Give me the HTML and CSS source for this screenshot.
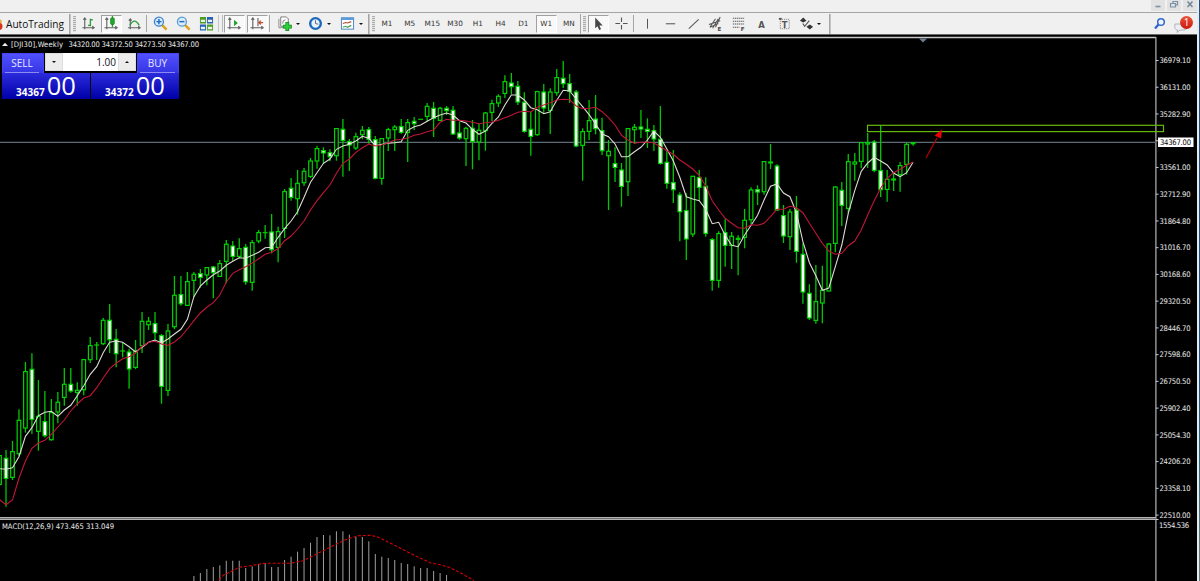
FILE: index.html
```html
<!DOCTYPE html>
<html lang="en">
<head>
<meta charset="utf-8">
<title>DJI30, Weekly</title>
<link rel="stylesheet" href="styles.css">
</head>
<body>
<div class="app">
<div class="window">
  <header class="titlebar">
    <span class="win-btn"><svg width="12" height="10"><path d="M3.500 6.500h5" stroke="#7b8fa5" stroke-width="1.600"/></svg></span>
    <span class="win-btn"><svg width="12" height="10"><path d="M5 3V1.500h4.500v3.500H8M2.500 3.500h5v3.500h-5z" fill="none" stroke="#7b8fa5" stroke-width="1.200"/></svg></span>
    <span class="win-btn"><svg width="12" height="10"><path d="M3.500 1.500l5 5.500M8.500 1.500l-5 5.500" stroke="#71869d" stroke-width="1.500"/></svg></span>
  </header>
  <nav class="toolbar">
    <div class="auto"><svg width="3" height="14"><path d="M0 2l2 2-1 4H0z" fill="#e3b04a"/><circle cx="-1" cy="9.500" r="3.500" fill="#d8341c"/></svg><span>AutoTrading</span></div>
    <i class="sep double"></i><i class="grip"></i>
    <span class="tool"><svg class="ic" viewBox="0 0 16 16"><path d="M4 2v12M1.500 12.500h12M2.500 4L4 2l1.500 2M12 11l2 1.500L12 14" class="axis"/><path d="M10 3v8M10 4h2.500M7.500 10H10" class="green"/></svg></span>
    <span class="tool on"><svg class="ic" viewBox="0 0 16 16"><path d="M3 2v12M.5 12.500h13M1.500 4L3 2l1.500 2M12 11l2 1.500L12 14" class="axis"/><path d="M9 0v12" class="green"/><rect x="7" y="2" width="4" height="7" rx="1" fill="#21a92b" stroke="#13801c" stroke-width=".7"/></svg></span>
    <span class="tool"><svg class="ic" viewBox="0 0 16 16"><path d="M3.500 3v11M1 12.500h13M2 5l1.500-2L5 5M12 11l2 1.500L12 14" class="axis"/><path d="M3 10q5-9 10 0" class="green"/></svg></span>
    <i class="sep"></i>
    <span class="tool"><svg class="ic" viewBox="0 0 16 16"><path d="M9.500 9.500l5 5" stroke="#d9a520" stroke-width="2.800"/><circle cx="6.300" cy="6" r="4.800" fill="#d7ecfb" stroke="#3c85cf" stroke-width="1.400"/><path d="M3.600 6H9M6.300 3.300v5.400" stroke="#1b67c4" stroke-width="1.500"/></svg></span>
    <span class="tool"><svg class="ic" viewBox="0 0 16 16"><path d="M9.500 9.500l5 5" stroke="#d9a520" stroke-width="2.800"/><circle cx="6.300" cy="6" r="4.800" fill="#d7ecfb" stroke="#5d9bd3" stroke-width="1.400"/><path d="M3.600 6H9" stroke="#1b67c4" stroke-width="1.500"/></svg></span>
    <span class="tool"><svg class="ic" viewBox="0 0 16 16"><path d="M1 1h6.500v7H1zM8.500 9H15v6.500H8.500z" fill="#4f9c25"/><path d="M8.500 1H15v7H8.500zM1 9h6.500v6.500H1z" fill="#2861b5"/><path d="M2 4h4.500v2.500H2zM9.500 4H14v2.500H9.500zM2 11.500h4.500V14H2zM9.500 11.500H14V14H9.500z" fill="#e9f3e7"/></svg></span>
    <i class="sep wide"></i>
    <span class="tool on"><svg class="ic" viewBox="0 0 16 16"><path d="M3 2v12M.5 12.500h13M1.500 4L3 2l1.500 2M12 11l2 1.500L12 14" class="axis"/><path d="M7.500 4v7l4-3.500z" fill="#1ba32a"/></svg></span>
    <span class="tool on"><svg class="ic" viewBox="0 0 16 16"><path d="M3 2v12M.5 12.500h13M1.500 4L3 2l1.500 2M12 11l2 1.500L12 14M8.500 2v9" class="axis"/><path d="M10 7h4M11.500 5L9.500 7l2 2" fill="none" stroke="#c4502a" stroke-width="1.400"/></svg></span>
    <i class="sep"></i>
    <span class="combo first"><svg class="ic" viewBox="0 0 16 16"><path d="M4 1h6l2 2v8H4z" fill="#fff" stroke="#777"/><path d="M2 3v9.500h7" fill="none" stroke="#888"/><path d="M6 8q0-4 3-4" fill="none" stroke="#777"/><path d="M11 6.500v9.500M6.300 11.300h9.500" stroke="#128519" stroke-width="4"/><path d="M11 7.200v8.100M7 11.300h8" stroke="#2fd13b" stroke-width="2.400"/></svg><b class="caret"></b></span>
    <span class="combo"><svg class="ic" viewBox="0 0 16 16"><circle cx="8" cy="8" r="5.700" fill="#e8f1f8" stroke="#1d67bb" stroke-width="2.500"/><path d="M8 4.500V8l3 .8" fill="none" stroke="#567"/></svg><b class="caret"></b></span>
    <span class="combo third"><svg class="ic" viewBox="0 0 16 16"><rect x="1.500" y="2" width="13" height="12" fill="#fff" stroke="#4380bc"/><path d="M1 3h14" stroke="#5b9bda" stroke-width="2.600"/><path d="M3 8l3-1 2 .5 4-1.500" fill="none" stroke="#b74935" stroke-width="1.200"/><path d="M3 12l3-1 2 1 4-2" fill="none" stroke="#42a350" stroke-width="1.200"/></svg><b class="caret"></b></span>
    <i class="sep double"></i><i class="grip"></i>
    <span class="tf">M1</span><span class="tf">M5</span><span class="tf">M15</span><span class="tf">M30</span><span class="tf">H1</span><span class="tf">H4</span><span class="tf">D1</span><span class="tf on">W1</span><span class="tf">MN</span>
    <i class="sep tight"></i><i class="grip"></i>
    <span class="tool on"><svg class="ic" viewBox="0 0 16 16"><path d="M4.500 1.500v11.500L7 10.800l1.700 4 2-.8L9 10h3.500z" fill="#484848"/></svg></span>
    <span class="tool"><svg class="ic" viewBox="0 0 16 16"><path d="M8 1.500v5M8 9.500v5M1.500 8h5M9.500 8h5" stroke="#555" stroke-width="1.200"/></svg></span>
    <i class="sep"></i>
    <span class="tf"><svg class="ic" viewBox="0 0 16 16"><path d="M8 3v10.500" class="ink"/></svg></span>
    <span class="tf"><svg class="ic" viewBox="0 0 16 16"><path d="M3 8.300h10" class="ink"/></svg></span>
    <span class="tf"><svg class="ic" viewBox="0 0 16 16"><path d="M3 13.500L13.500 3.500" class="ink"/></svg></span>
    <span class="tf"><svg class="ic" viewBox="0 0 16 16"><path d="M2 12L8 3M5 13l6-10M8 12l5-11M1 9l12-4M2 12l9-4" class="ink"/><text x="10" y="16" class="tiny">E</text></svg></span>
    <span class="tf"><svg class="ic" viewBox="0 0 16 16"><path d="M2 2.500h12M2 5.500h12M2 8.500h12M2 12h7" class="ink" stroke-dasharray="1.500 .7"/><text x="10.500" y="16" class="tiny">F</text></svg></span>
    <span class="tf"><svg class="ic" viewBox="0 0 16 16"><text x="4.500" y="12.500" class="letter">A</text></svg></span>
    <span class="tf"><svg class="ic" viewBox="0 0 16 16"><rect x="3.500" y="3.500" width="9.500" height="10" fill="none" stroke="#777" stroke-dasharray="1 1"/><path d="M2 2h3v2H2z" fill="#555"/><text x="5" y="12.500" class="letter">T</text></svg></span>
    <span class="combo last"><svg class="ic" viewBox="0 0 16 16"><path d="M1 5l3.500-3.500L8 5 4.500 7zM8 11.500L11.500 9l3.500 2.500-3.500 3z" fill="#333"/><path d="M4 8l2 3 5-6" fill="none" stroke="#555" stroke-width="1.200"/></svg><b class="caret"></b></span>
    <i class="sep double"></i>
    <div class="right-tools">
      <svg width="14" height="14" viewBox="0 0 14 14"><path d="M5.500 7.500L2 11.500" stroke="#2b64d0" stroke-width="2.200"/><circle cx="8" cy="5" r="3.300" fill="#eef4fd" stroke="#3468cb" stroke-width="1.500"/></svg>
      <div class="chat"><svg width="14" height="12" viewBox="0 0 14 12"><path d="M1 3h9q3 0 3 3t-3 3H6l-3 2.500.5-2.500Q0 9 1 3z" fill="#eceef4" stroke="#b0b2bd"/></svg><span class="badge">1</span></div>
    </div>
  </nav>
  <main class="chart-wrap">
    <svg class="chart" width="1197" height="547" viewBox="0 34 1197 547">
      <rect x="0" y="34" width="1197" height="1" fill="#696969"/>
      <path d="M0 37.500H1156" stroke="#c8c8c8" stroke-width="1.300"/>
      <path d="M1155.900 37V581" stroke="#a8a8a8" stroke-width="1.300"/>
      <rect x="0" y="517" width="1156" height="3" fill="#6e6e6e"/>
      <path d="M0 517.500H1156M0 519.500H1156" stroke="#bcbcbc" stroke-width=".9"/>
      <path d="M0 142.300H1156" stroke="#5d6b79" stroke-width="1.200"/>
      <path d="M919 38.500h8l-4 4z" fill="#6d7d90"/>
      <g id="histogram"></g>
      <polyline class="signal" points="219,579.700 223.300,575.300 230,572 239.300,567.300 248.300,566 265,563.300 290,563.300 303.300,560.700 316.700,554 328.300,548.300 336.300,544 346.700,539.300 358.300,535.700 370,535.300 376.700,536.700 386.700,541.300 400,548 415,555.700 430,562.700 440,564.700 448.300,567 458.300,571.700 474,580.500"/>
      <g id="candles"></g>
      <polyline id="ma-fast" class="ma fast"/>
      <polyline id="ma-slow" class="ma slow"/>
      <rect x="867.500" y="125.300" width="296" height="6.300" fill="none" stroke="#66b80a" stroke-width="1.200"/>
      <path d="M926 158l11-20" stroke="#b80000" stroke-width="1.200"/>
      <path d="M942 129.500l-7.500 6 6.500 3z" fill="#f00000"/>
      <path d="M2 46l3-3.200L8 46z" fill="#eee"/>
      <text class="label" x="11" y="47" textLength="52">[DJI30],Weekly</text>
      <text class="label" x="68.500" y="47" textLength="130.500">34320.00 34372.50 34273.50 34367.00</text>
      <text class="label" x="2" y="529" textLength="112">MACD(12,26,9) 473.465 313.049</text>
      <g id="scale"></g>
      <rect x="1158" y="137.500" width="35.500" height="9.500" fill="#fff"/>
      <text class="label dark" x="1160" y="145.200" textLength="31">34367.00</text>
      <path d="M1156 519.500h2.500" stroke="#ccc"/>
      <text class="label" x="1159" y="527.600" textLength="30">1554.536</text>
    </svg>
    <section class="trade">
      <div class="tab sell">SELL</div>
      <div class="volume"><span class="step"><b class="caret"></b></span><span class="amount">1.00</span><span class="step"><b class="caret up"></b></span></div>
      <div class="tab buy">BUY</div>
      <div class="quote q-sell"><b>34367</b><span>00</span></div>
      <div class="quote q-buy"><b>34372</b><span>00</span></div>
    </section>
  </main>
</div>
<div class="edge"></div>
</div>
<script src="chart.js"></script>
</body>
</html>
```
FILE: styles.css
```css
* { box-sizing: border-box; }
body { margin: 0; background: #000; font-family: "Open Sans", "Noto Sans", sans-serif; overflow: hidden; }
.app { display: flex; width: 1200px; height: 581px; }
.window { width: 1197px; flex: none; display: flex; flex-direction: column; }
.edge { width: 3px; border-left: 2px solid #e6ebf0; background: linear-gradient(#244f80, #1b4f86 65%, #286b79 80%, #64797d 95%); }
.titlebar { height: 12px; background: #f0f0f0; display: flex; justify-content: flex-end; gap: 2px; }
.win-btn { width: 14px; height: 11px; background: #e2e2e2; display: flex; justify-content: center; }
.toolbar { height: 22px; background: #f0f0f0; border-top: 1px solid #a5a5a5; display: flex; align-items: center; flex: none; }
.auto { width: 69px; display: flex; align-items: center; gap: 3px; font-size: 10.1px; color: #111; white-space: nowrap; flex: none; }
.sep { width: 3px; height: 17px; border-left: 1px solid #a5a5a5; flex: none; }
.sep.double { width: 2px; height: 20px; border-right: 1px solid #c5c5c5; }
.sep.wide { width: 5px; border-right: 1px solid #bbb; border-left-color: #c5c5c5; }
.sep.tight { width: 1px; height: 20px; }
.grip { width: 3px; height: 16px; margin: 0 1px 0 2px; flex: none; background: repeating-linear-gradient(#b0b0b0 0 1px, #dedede 1px 2px); }
.tool, .tf { width: 23px; height: 18px; display: flex; align-items: center; justify-content: center; flex: none; }
.tf { width: 22.75px; font-family: "DejaVu Sans", sans-serif; font-size: 7.3px; color: #333; }
.on { background: #f9f9f9; border-left: 1px solid #a0a0a0; border-top: 1px solid #a0a0a0; border-right: 1px solid #fff; border-bottom: 1px solid #fff; width: 21px; margin: 0 1px; }
.tf.on { width: 20.75px; }
.ic { width: 15px; height: 15px; flex: none; overflow: visible; }
.axis { fill: none; stroke: #626262; stroke-width: 1.2; }
.green { fill: none; stroke: #2f9a38; stroke-width: 1.4; }
.ink { fill: none; stroke: #555; stroke-width: 1.1; }
.tiny { font: bold 6px "DejaVu Sans", sans-serif; fill: #444; }
.letter { font: bold 10px "DejaVu Sans Condensed", "DejaVu Sans", sans-serif; fill: #555; }
.combo { width: 32px; display: flex; align-items: center; gap: 3.5px; flex: none; }
.combo.first { width: 36px; padding-left: 5px; }
.combo.third { width: 27.5px; }
.combo.last { width: 33px; padding-left: 3px; }
.caret { width: 0; height: 0; border: 2.5px solid transparent; border-top: 2.5px solid #111; border-bottom: 0; }
.caret.up { border-top: 0; border-bottom: 2.5px solid #111; }
.right-tools { margin-left: auto; display: flex; align-items: center; gap: 7px; padding-right: 3px; }
.chat { width: 20px; height: 20px; position: relative; padding-top: 7px; }
.chat svg { display: block; }
.badge { position: absolute; left: 6px; top: 2px; width: 13px; height: 13px; border-radius: 50%; background: linear-gradient(#f0513a, #c9190b); color: #fff; font-size: 10px; line-height: 13px; text-align: center; }
.chart-wrap { position: relative; height: 547px; background: #000; }
.chart { display: block; }
.label { font-family: "DejaVu Sans Condensed", "DejaVu Sans", sans-serif; font-size: 7.6px; fill: #ececec; }
.label.dark { fill: #000; }
.ma { fill: none; stroke-width: 1.1; }
.fast { stroke: #dedbd5; }
.slow { stroke: #c01538; }
.signal { fill: none; stroke: #d80000; stroke-width: 1.1; stroke-dasharray: 3 1.8; }
.wick { stroke: #00c800; stroke-width: 1.3; }
.up-body, .down-body { stroke: #00d400; stroke-width: 1.2; fill: #000; }
.down-body { fill: #fff; }
.bar { stroke: #a0a0a0; stroke-width: 1; }
.trade { position: absolute; left: 2px; top: 19px; width: 177px; height: 46px; display: grid; grid-template-columns: 42px 46px 1px 46px 42px; grid-template-rows: 20px 26px; grid-template-areas: "s v v v b" "p p . q q"; color: #e8e8ff; }
.tab { height: 20px; background: linear-gradient(#5050ff, #3535e4); font-size: 10px; line-height: 18px; text-align: center; border: 1px solid #4545f5; border-bottom: 0; }
.tab::after { content: ""; display: block; height: 1px; margin: 0 2px; background: #8b8bf2; }
.sell { grid-area: s; padding-right: 2px; }
.buy { grid-area: b; padding-right: 1px; }
.volume { grid-area: v; display: flex; height: 18px; margin: 0 1px 2px; background: #fff; color: #111; font-size: 10px; }
.step { width: 18px; background: #ececec; border: 1px solid #ddd; display: flex; align-items: center; justify-content: center; }
.amount { flex: 1; text-align: right; padding-right: 2px; line-height: 18px; }
.quote { height: 26px; display: flex; align-items: flex-end; justify-content: center; gap: 2px; color: #fff; background: linear-gradient(#2b2bdc, #0000a8); }
.quote b { font-size: 10px; line-height: 14px; }
.quote span { font-size: 25.5px; line-height: 27px; }
.q-sell { grid-area: p; }
.q-buy { grid-area: q; }
```
FILE: chart.js
```js
const STEP = 6.479;
const xAt = i => 6 + i * STEP;

// Each candle: high, body top, body bottom, low, falling (1) or rising (0).
const candles = `455 455.3 484.7 486 0|450 458 478.7 506.7 1|441 451.3 477.7 480 0|409.3 420 454 455.7 0|362 371.3 428.3 432.7 0|353.3 369 419.7 434 1|380 416 431.7 450.7 0|391 421.3 436 437.5 1|399 412.3 440 440.7 0|392 402 412.3 423.3 0|368 384 397.7 405.7 0|368 384 391.3 392.7 1|382.3 390 392.7 405.7 0|359.3 359.3 390 395.3 0|337 345.3 360 363 0|342 345 345 360 1|318 320 344 345 0|304 320 340 353 1|329 339 354 367.3 1|343 351 351 357.3 1|348.7 351.7 369.3 388.7 1|340 350.7 367.7 369 0|312 321 346 353 0|317 321 325 330 0|312 323.3 333 342 1|334 335.3 386.7 403.7 1|324 330.7 390.7 396 0|276 295 327 329.3 0|276 294.3 304 305.7 1|272 281.3 305.7 305.7 0|272 274 280.7 297 0|269 273.3 277.7 287.7 1|267.3 267.3 275.3 285.3 0|266 266.7 273 298.3 1|260 263.3 276.7 276.7 0|240 244 261.7 283.3 0|241 245.7 256.7 260.7 1|238.3 248.3 256.7 258 0|244 247 282 284.7 1|240 242.3 282.7 290.7 0|230 232.3 241.3 243.3 0|225 232.7 232.7 238.7 1|214 231.7 250 253.3 1|226.7 231.3 247.7 262.3 0|189 191.3 228.7 238 0|178 188 197.7 200.7 1|170 183 199 214.7 0|168 171 183 186 0|158 160.7 176.7 178 0|146 148.3 161.3 168.7 0|147.3 150.3 153.3 164 1|149.3 152.3 157 161.3 1|128.3 128.3 156 160.7 0|119 129 140.7 176.7 1|139 141.3 145.3 171 1|132.7 136.3 148.3 150 0|126 130 135 139.3 0|127 129.3 139.7 143.7 1|136 139.3 178.7 179.3 1|138.3 138.3 178.7 184.7 0|127.7 129.3 138.3 151 0|125 126.7 130 151 0|119 126.3 132.7 134 1|119 122.3 132.7 162 0|117 121 124 130 1|119.3 119.3 119.3 119.3 1|103 106 116.7 121.7 0|102 108 118.7 137 1|106.7 108 120.7 120.7 0|106 108 111 115 1|106 110 134.3 135 1|122 132.7 138.3 139.7 1|126.7 128 139 166 0|120 128 141.7 169.3 1|123.3 130 142.3 160.3 0|112 112.7 131 150.7 0|99.7 103.3 112.7 121 0|94.3 96 103.3 107 0|75.3 81.3 93.7 98 0|73 82.7 87 94.3 1|81 86 102.3 105 1|92.3 102 131.7 132.7 1|111.7 129 136.7 155.7 1|90.7 91.3 135 135.7 0|84 91.7 108.3 113.3 1|88.3 91.7 110.7 134 0|69 77.3 93 95.7 0|61 78 84 88 1|74 83.3 91.7 102.7 1|90 91.7 146.3 147.3 1|128.3 131.3 145.7 180.7 0|100 120.3 131.7 140 0|95 118.7 129 134.3 1|117.7 130.3 151 155 1|140 151 156 210 0|147.3 163.3 167.7 182 1|163 169.7 186.7 206.7 1|128.3 128.3 182 196 0|124 127 130 144 0|110 126.7 129.3 138 1|118.3 129 131.7 148 1|125 130.3 139.3 151 1|106 139 163.7 164.7 1|151 162 183.7 188.7 1|150 182.3 190 203 1|192.3 194.7 212 241.3 1|193.3 210.3 239.3 260 1|176 176 234.3 237 0|170 177.3 187.7 201 1|177.3 186 233.7 236.7 1|238 239.3 280.7 290.7 1|231.3 233.3 280.7 287.7 0|219.3 232.3 245.7 266.7 1|232 236 245.7 269 0|235.3 238 239.7 275.3 1|209 220 237.7 248.3 0|187.3 189.7 220 224 0|185.3 189.3 192.3 205 1|161 161.3 192 194.7 0|144 161.7 163.3 169 1|164.3 165.7 210.3 211 1|205 215.3 236.3 243 1|209 211.7 237 250 0|196 210 251.7 262.7 1|243.3 254 292.3 303.7 1|284.3 293 318.3 320 1|265 301.3 320.7 323.7 0|265.7 290 303.3 323.3 0|243.3 243.7 291.3 291.3 0|186 186.7 243.7 252.3 0|182 190 205.7 226 1|154 161.3 208.7 213.3 0|153 161.7 164.3 180.7 0|142.3 142.3 161.7 168.3 0|133 142.3 144.3 168 0|140 141.7 170.7 172.3 1|125 170.3 190 197 1|170 179 189.7 201.7 0|172 178.7 180.3 191 1|162 165.3 175 191.7 0|142.7 144 164.7 174.7 0|142 142.3 144 145.7 0`
  .split('|').map(row => row.split(' ').map(Number));

const fast = [468.7,469.3,467.7,456.7,436.3,427.7,415.7,412.3,411.3,416.3,410,405.3,395.7,385.7,374.3,366.7,352.7,342.3,341,342.3,346.7,352,347.3,342.3,340,343,339,334,329.3,319.3,296.7,286,280,274.7,271,265.3,261.3,257.7,258.3,255.3,252.3,247.7,247.3,237.3,228.7,221,211.7,197.3,182.3,172.7,163.3,159,149.3,146,144.3,141,136.3,138.3,145.7,144.3,143.3,142.7,141.7,130.3,126.7,125,121.3,117.7,115,113,115,120.7,123,129.3,134.3,131,123.3,117,105,95,95,100,107.7,109.7,113.7,111.7,100.3,90.3,91,99,106.7,114.7,124,134,136.7,144,156.7,156.7,151.7,147.3,140,131,137.3,149,161,177.3,196.7,199,200.7,209.3,223.7,222.3,235.3,245.3,246.7,235,225.3,215.3,200,186.3,184,193,196.7,212.7,241.7,262.7,275.7,290.3,288,266.7,245,213.3,190.7,171.3,163,157.3,161,165,173,176.7,172.7,162.3];
const slow = [499.7,504.7,500,478.3,461,448.3,443,440.3,434.3,427,420,411,404,398,395.7,387.7,378,368.7,363.3,358.7,356.7,353.3,346.3,342.3,341.3,344,345.3,342,336.7,329,320.7,313,307.3,302.7,295,282,273.3,269.7,266.7,263,258.7,254.3,252.3,248.7,240.7,236,229,221,210,200.7,192.7,185,173.3,163.3,159,152.3,147.7,144,146,145,142.7,140,139.3,138,135.3,134,131.7,130,122.3,119.3,120.3,120.3,121,122.3,123.7,122.7,122,120.3,117.7,115.3,112.3,111.3,112,107.3,105,102.7,100,99.3,99.7,106,108.7,108.3,107.3,111.7,117.7,125,135.3,140,143.3,142.3,142,143,146.7,150.7,154.3,160,164.3,169,175.3,186,200.7,210,218.3,223.3,227.7,228.3,224.7,225.3,223.3,216.7,209.3,209.3,206.3,207.7,212.7,223.3,233.3,243.3,251,254.3,253.3,245.7,241,230,215,200.7,188.3,178.3,172.7,169.3,165.3,162];
const barTops = [576,573,569,567,565.3,560.7,560.7,560.7,568,566.3,564,563,567,567,560,556.7,551.7,548,542.7,537,535,535.3,531.3,531.3,534.7,536.7,537,541.3,554,556.7,558,560,563,564,566.3,568,568,571,573,575];
const prices = ['36979.10','36131.00','35282.90','','33561.00','32712.90','31864.80','31016.70','30168.60','29320.50','28446.70','27598.60','26750.50','25902.40','25054.30','24206.20','23358.10','22510.00'];

document.getElementById('candles').innerHTML = candles.map(([h, t, b, l, down], k) => {
  const x = xAt(k - 1);
  const body = b - t < 1
    ? `<path class="wick" d="M${x - 2.4} ${t}h4.800"/>`
    : `<rect class="${down ? 'down' : 'up'}-body" x="${x - 1.8}" y="${t + .3}" width="3.6" height="${Math.max(1, b - t - .6)}"/>`;
  return `<path class="wick" d="M${x} ${h}V${l}"/>${body}`;
}).join('');

const toPoints = values => values.map((y, k) => `${xAt(k - 1)},${y}`).join(' ');
document.getElementById('ma-fast').setAttribute('points', toPoints(fast));
document.getElementById('ma-slow').setAttribute('points', toPoints(slow));

document.getElementById('histogram').innerHTML = barTops
  .map((y, k) => `<path class="bar" d="M${xAt(29 + k)} ${y}V581"/>`).join('');

document.getElementById('scale').innerHTML = prices.map((price, k) => {
  const y = 60.5 + k * 26.74;
  return `<path d="M1156 ${y}h2.500" stroke="#ccc"/>` +
    (price ? `<text class="label" x="1159.500" y="${y + 2.8}" textLength="31">${price}</text>` : '');
}).join('');
```
